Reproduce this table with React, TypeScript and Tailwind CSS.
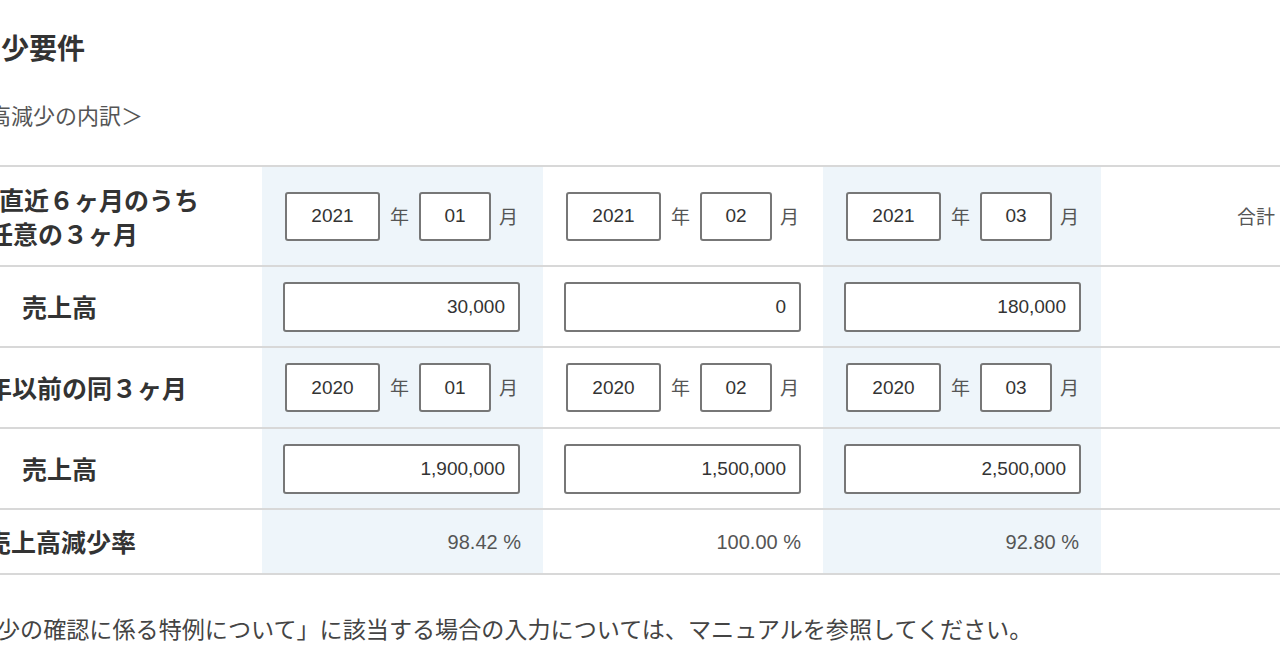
const jp = "font-['Noto_Sans_CJK_JP','Noto_Sans',sans-serif]";
const num = "font-['Liberation_Sans','Noto_Sans_CJK_JP',sans-serif]";

const cols = "grid grid-cols-[262px_281px_280px_278px_1fr]";

type Ym = { y: string; m: string };

function DateCell({ v, blue }: { v: Ym; blue?: boolean }) {
  return (
    <div className={`flex items-center pl-[23px] ${blue ? "bg-[#eef5fa]" : ""}`}>
      <input
        readOnly
        value={v.y}
        className={`${num} h-[49px] w-[95px] rounded-[3px] border-2 border-[#777] bg-white text-center text-[19px] text-[#333] outline-none`}
      />
      <span className={`${jp} mx-[10px] text-[19px] text-[#555]`}>年</span>
      <input
        readOnly
        value={v.m}
        className={`${num} h-[49px] w-[72px] rounded-[3px] border-2 border-[#777] bg-white text-center text-[19px] text-[#333] outline-none`}
      />
      <span className={`${jp} ml-[8px] text-[19px] text-[#555]`}>月</span>
    </div>
  );
}

function AmountCell({ v, blue }: { v: string; blue?: boolean }) {
  return (
    <div className={`flex items-center pl-[21px] ${blue ? "bg-[#eef5fa]" : ""}`}>
      <input
        readOnly
        value={v}
        className={`${num} h-[50px] w-[237px] rounded-[3px] border-2 border-[#777] bg-white pr-[13px] text-right text-[19px] text-[#333] outline-none`}
      />
    </div>
  );
}

function RateCell({ v, blue }: { v: string; blue?: boolean }) {
  return (
    <div
      className={`${num} flex items-center justify-end pr-[22px] text-[20px] text-[#555] ${blue ? "bg-[#eef5fa]" : ""}`}
    >
      {v}
    </div>
  );
}

export default function App() {
  const recent: Ym[] = [
    { y: "2021", m: "01" },
    { y: "2021", m: "02" },
    { y: "2021", m: "03" },
  ];
  const prev: Ym[] = [
    { y: "2020", m: "01" },
    { y: "2020", m: "02" },
    { y: "2020", m: "03" },
  ];

  return (
    <div className={`${jp} h-[671px] w-[1280px] overflow-hidden bg-white text-[#333]`}>
      <h2 className="mt-[27px] whitespace-nowrap pl-[1px] text-[28px] font-bold leading-[40px]">
        少要件
      </h2>
      <p className="mt-[32px] ml-[-77px] whitespace-nowrap text-[22px] leading-[30px] text-[#555]">
        ＜売上高減少の内訳＞
      </p>

      <div className="mt-[36px] border-t-2 border-[#d8d8d8]">
        {/* 直近 */}
        <div className={`${cols} h-[100px] border-b-2 border-[#d8d8d8]`}>
          <div className="flex flex-col justify-center whitespace-nowrap text-[25px] font-bold leading-[34px]">
            <span className="ml-[-1px]">直近６ヶ月のうち</span>
            <span className="ml-[-12px]">任意の３ヶ月</span>
          </div>
          <DateCell v={recent[0]} blue />
          <DateCell v={recent[1]} />
          <DateCell v={recent[2]} blue />
          <div className="flex items-center pl-[136px] text-[19px] text-[#555]">合計</div>
        </div>

        <div className={`${cols} h-[81px] border-b-2 border-[#d8d8d8]`}>
          <div className="flex items-center pl-[22px] text-[25px] font-bold">売上高</div>
          <AmountCell v="30,000" blue />
          <AmountCell v="0" />
          <AmountCell v="180,000" blue />
          <div />
        </div>

        {/* 1年前 */}
        <div className={`${cols} h-[81px] border-b-2 border-[#d8d8d8]`}>
          <div className="flex items-center whitespace-nowrap text-[25px] font-bold">
            <span className="ml-[-13px]">年以前の同３ヶ月</span>
          </div>
          <DateCell v={prev[0]} blue />
          <DateCell v={prev[1]} />
          <DateCell v={prev[2]} blue />
          <div />
        </div>

        <div className={`${cols} h-[81px] border-b-2 border-[#d8d8d8]`}>
          <div className="flex items-center pl-[22px] text-[25px] font-bold">売上高</div>
          <AmountCell v="1,900,000" blue />
          <AmountCell v="1,500,000" />
          <AmountCell v="2,500,000" blue />
          <div />
        </div>

        <div className={`${cols} h-[65px] border-b-2 border-[#d8d8d8]`}>
          <div className="flex items-center whitespace-nowrap text-[25px] font-bold">
            <span className="ml-[-14px]">売上高減少率</span>
          </div>
          <RateCell v="98.42 %" blue />
          <RateCell v="100.00 %" />
          <RateCell v="92.80 %" blue />
          <div />
        </div>
      </div>

      <p className="mt-[37px] ml-[-3px] whitespace-nowrap text-[23.1px] leading-[32px] text-[#444]">
        少の確認に係る特例について」に該当する場合の入力については、マニュアルを参照してください。
      </p>
    </div>
  );
}
